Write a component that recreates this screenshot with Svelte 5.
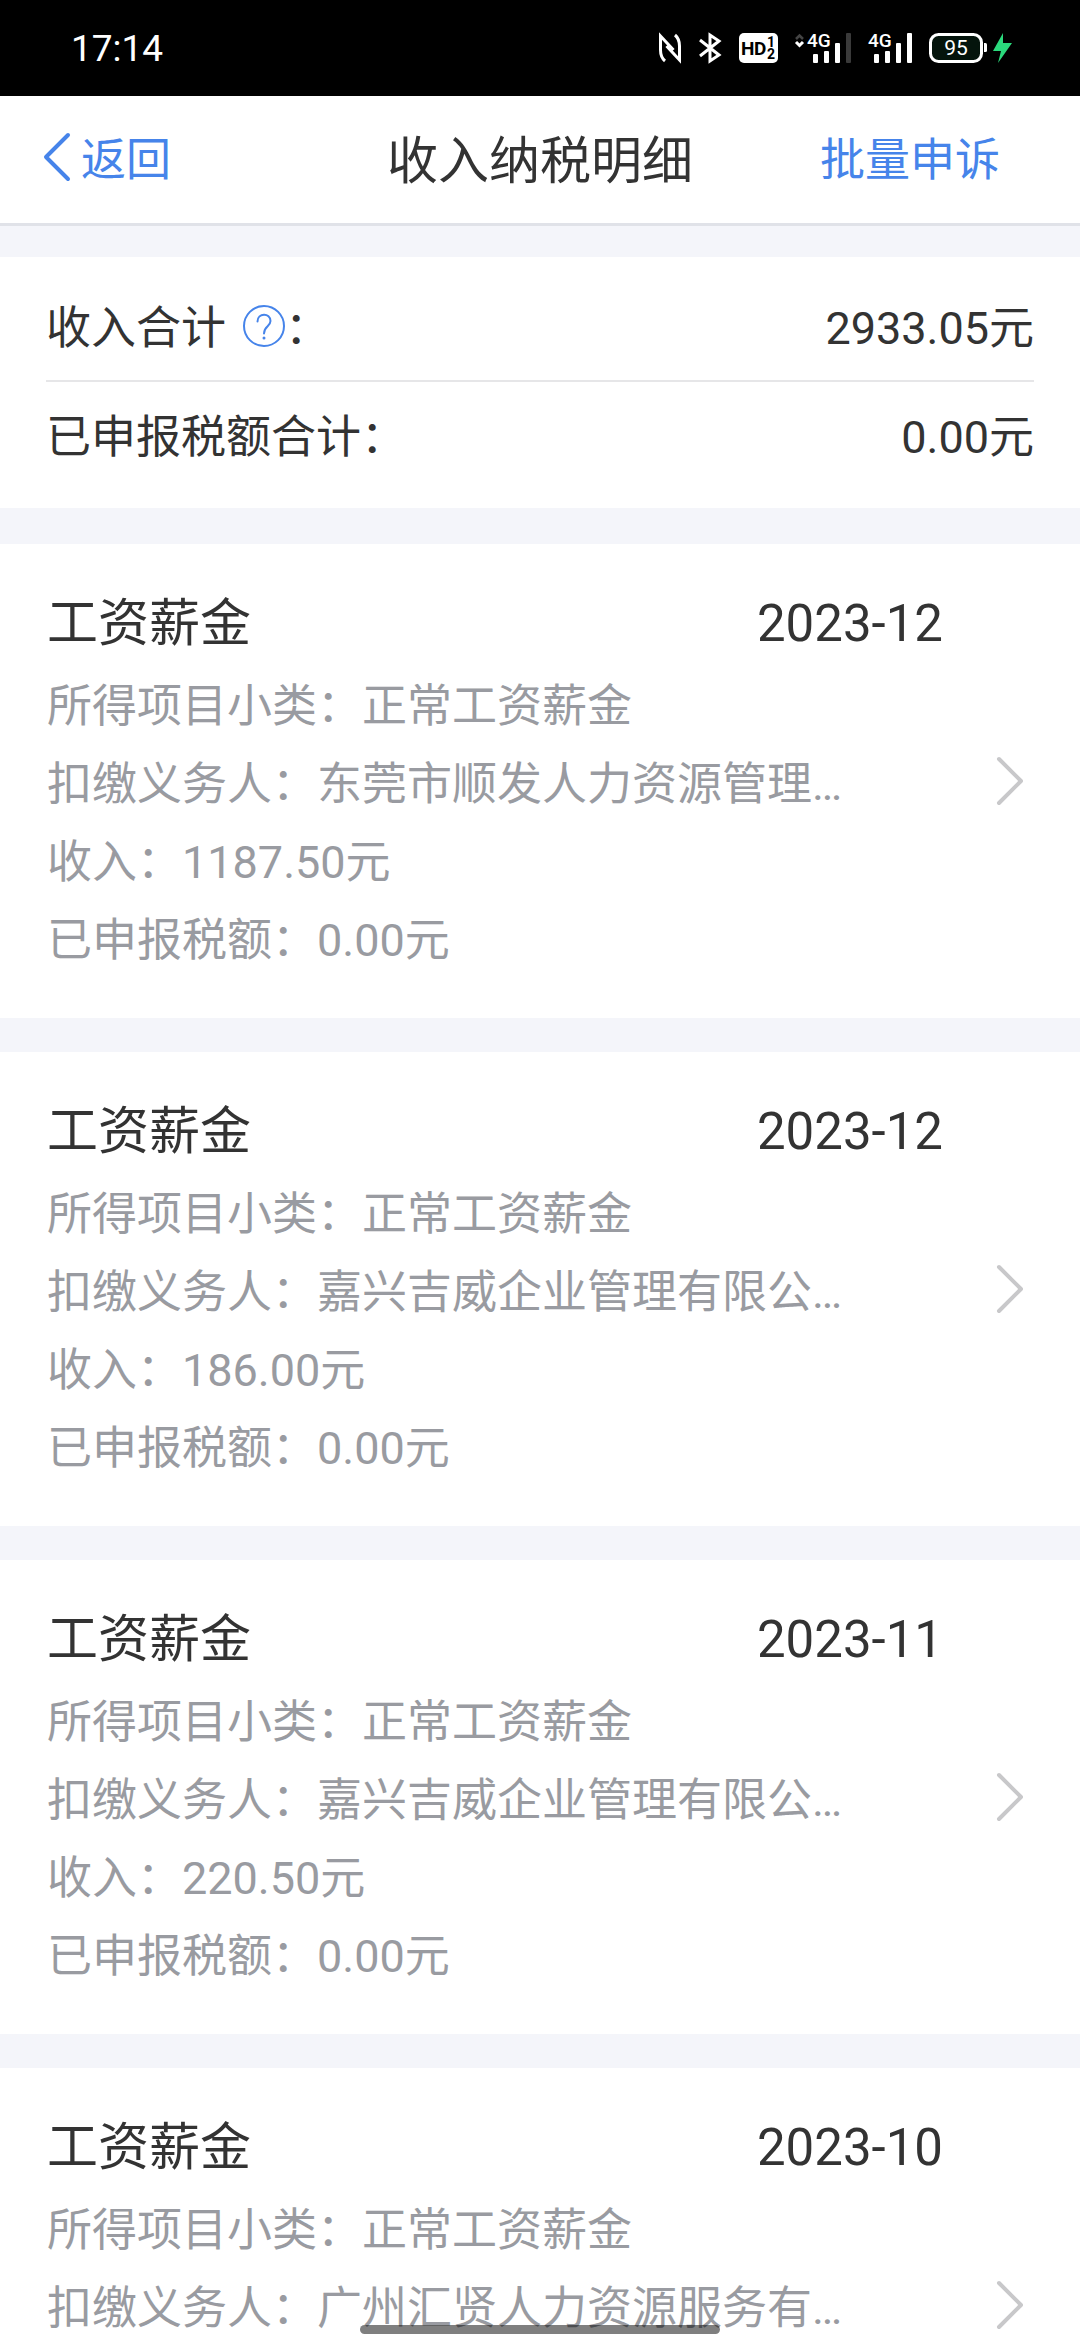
<script lang="ts">
	type RecordItem = {
		period: string;
		agent: string;
		income?: string;
		tax?: string;
	};

	const totals = { income: '2933.05元', tax: '0.00元' };

	const records: RecordItem[] = [
		{ period: '2023-12', agent: '东莞市顺发人力资源管理…', income: '1187.50元', tax: '0.00元' },
		{ period: '2023-12', agent: '嘉兴吉威企业管理有限公…', income: '186.00元', tax: '0.00元' },
		{ period: '2023-11', agent: '嘉兴吉威企业管理有限公…', income: '220.50元', tax: '0.00元' },
		{ period: '2023-10', agent: '广州汇贤人力资源服务有…' }
	];
</script>

<div class="screen">
	<div class="status-bar">
		<span class="clock">17:14</span>
		<div class="status-icons">
			<!-- nfc -->
			<svg width="22" height="30" viewBox="0 0 22 30" fill="none" stroke="#fff" stroke-width="3">
				<path d="M6 28C2.500 25 1.500 22 1.500 17V3L14.500 17" />
				<path d="M16 2C19.500 5 20.500 8 20.500 13V27L7.500 13" />
			</svg>
			<!-- bluetooth -->
			<svg class="bt" width="24" height="30" viewBox="0 0 24 30" fill="none" stroke="#fff" stroke-width="3">
				<path d="M2 7L21 22L12 28V2L21 8L2 23" />
			</svg>
			<!-- hd voice -->
			<svg class="hd" width="39" height="30" viewBox="0 0 39 30">
				<rect width="39" height="30" rx="5" fill="#fff" />
				<text x="2" y="22" font-size="19" font-weight="700">H</text>
				<text x="15" y="22" font-size="19" font-weight="700">D</text>
				<text x="28" y="14" font-size="14" font-weight="700">1</text>
				<text x="28" y="26" font-size="14" font-weight="700">2</text>
			</svg>
			<!-- sim 1 -->
			<svg class="sim1" width="56" height="30" viewBox="0 0 56 30" fill="#fff">
				<path d="M1 6L4.500 2.500L8 6" fill="none" stroke="#444" stroke-width="2.500" />
				<path d="M1 9L4.500 12.500L8 9" fill="none" stroke="#fff" stroke-width="3" />
				<text x="12" y="14" font-size="19" font-weight="500">4G</text>
				<rect x="18" y="21" width="5" height="9" rx="1" />
				<rect x="29" y="18" width="5" height="12" rx="1" />
				<rect x="40" y="10" width="5" height="20" rx="1" />
				<rect x="51" y="0" width="5" height="30" rx="1" fill="#3a3a3a" />
			</svg>
			<!-- sim 2 -->
			<svg class="sim2" width="44" height="30" viewBox="0 0 44 30" fill="#fff">
				<text x="0" y="14" font-size="19" font-weight="500">4G</text>
				<rect x="6" y="21" width="5" height="9" rx="1" />
				<rect x="17" y="18" width="5" height="12" rx="1" />
				<rect x="28" y="10" width="5" height="20" rx="1" />
				<rect x="39" y="0" width="5" height="30" rx="1" />
			</svg>
			<!-- battery -->
			<svg class="battery" width="84" height="32" viewBox="0 0 84 32" fill="#fff">
				<rect x="1.500" y="2.500" width="51" height="27" rx="8" fill="#04140c" stroke="#fff" stroke-width="3" />
				<path d="M55 11h1.500q1.500 0 1.500 1.500v6q0 1.500-1.500 1.500H55z" />
				<text x="27" y="23" font-size="21" text-anchor="middle">95</text>
				<path d="M74 1L64 19H72L69 31L83 11H74Z" fill="#2bd97c" />
			</svg>
		</div>
	</div>

	<header class="nav">
		<button class="back" type="button">
			<svg width="27" height="48" viewBox="0 0 27 48" fill="none" stroke="currentColor" stroke-width="4" stroke-linecap="round" stroke-linejoin="round">
				<path d="M24 2L2 24L24 46" />
			</svg>
			返回
		</button>
		<h1>收入纳税明细</h1>
		<button class="appeal" type="button">批量申诉</button>
	</header>

	<main>
		<dl class="summary">
			<div class="sum-row">
				<dt>
					收入合计
					<button class="help" type="button" aria-label="收入合计">
						<svg width="42" height="42" viewBox="0 0 42 42" fill="none" stroke="currentColor" stroke-width="2">
							<circle cx="21" cy="21" r="20" />
							<path d="M14.500 16.500C14.500 7.500 27.500 7.500 27.500 16C27.500 21.500 21 21 21 28.500" stroke-linecap="round" />
							<circle cx="21" cy="33" r="1.500" fill="currentColor" stroke="none" />
						</svg>
					</button>：
				</dt>
				<dd>{totals.income}</dd>
			</div>
			<div class="sum-row">
				<dt>已申报税额合计：</dt>
				<dd>{totals.tax}</dd>
			</div>
		</dl>

		<ul class="records">
			{#each records as r}
				<li>
					<button class="card" type="button">
						<span class="info">
							<span class="head">
								<span>工资薪金</span>
								<span>{r.period}</span>
							</span>
							<span class="line">所得项目小类：正常工资薪金</span>
							<span class="line">扣缴义务人：{r.agent}</span>
							{#if r.income}
								<span class="line">收入：{r.income}</span>
							{/if}
							{#if r.tax}
								<span class="line">已申报税额：{r.tax}</span>
							{/if}
						</span>
						<svg class="arrow" width="28" height="50" viewBox="0 0 28 50" fill="none" stroke="#c8c8ca" stroke-width="4" stroke-linecap="round" stroke-linejoin="round">
							<path d="M3 3L25 25L3 47" />
						</svg>
					</button>
				</li>
			{/each}
		</ul>
	</main>

	<div class="home-bar"></div>
</div>

<style>
	:global(body) {
		margin: 0;
	}

	.screen {
		display: flex;
		flex-direction: column;
		height: 100vh;
		overflow: hidden;
		background: #f4f5fa;
		color: #333;
		font-family: Roboto, 'Noto Sans CJK SC', sans-serif;
		font-size: 45px;
	}

	button {
		padding: 0;
		border: 0;
		background: none;
		color: inherit;
		font: inherit;
		cursor: pointer;
	}

	svg {
		display: block;
		flex-shrink: 0;
		overflow: visible;
	}

	.status-bar {
		display: flex;
		align-items: center;
		justify-content: space-between;
		flex-shrink: 0;
		height: 96px;
		padding: 0 67px 0 71px;
		background: #000;
		color: #fff;
	}

	.clock {
		font-size: 37px;
	}

	.status-icons {
		display: flex;
		align-items: center;
		gap: 17px;
	}

	.hd text {
		fill: #000;
	}

	.nav {
		display: grid;
		grid-template-columns: 1fr auto 1fr;
		align-items: center;
		flex-shrink: 0;
		box-sizing: border-box;
		height: 130px;
		padding: 0 80px 6px 44px;
		border-bottom: 3px solid #e0e2e8;
		background: #fff;
	}

	.nav h1 {
		margin: 0 0 0 36px;
		font-size: 51px;
		font-weight: 400;
	}

	.back,
	.appeal {
		color: #4684ea;
	}

	.back {
		display: flex;
		align-items: center;
		justify-self: start;
		gap: 10px;
	}

	.appeal {
		justify-self: end;
	}

	main {
		flex: 1;
		min-height: 0;
		padding-top: 31px;
		overflow: hidden;
	}

	.summary {
		margin: 0 0 36px;
		padding: 16px 46px 19px;
		background: #fff;
	}

	.sum-row {
		display: flex;
		align-items: center;
		justify-content: space-between;
		box-sizing: border-box;
		height: 107px;
		padding-bottom: 5px;
	}

	.sum-row + .sum-row {
		height: 109px;
		border-top: 2px solid #e6e6e8;
	}

	dt {
		display: flex;
		align-items: center;
	}

	dd {
		margin: 0;
	}

	.help {
		margin: 4px 0 0 17px;
		color: #4684ea;
	}

	.records {
		display: flex;
		flex-direction: column;
		gap: 34px;
		margin: 0;
		padding: 0;
		list-style: none;
	}

	.card {
		display: flex;
		align-items: center;
		width: 100%;
		min-height: 474px;
		padding: 38px 56px 38px 47px;
		background: #fff;
		text-align: left;
	}

	.info {
		display: flex;
		flex: 1;
		flex-direction: column;
		align-self: flex-start;
		min-width: 0;
	}

	.head {
		display: flex;
		justify-content: space-between;
		margin: 0 53px 2px 0;
		color: #333;
		font-size: 51px;
		line-height: 84px;
	}

	.line {
		color: #999ba1;
		line-height: 78px;
		white-space: nowrap;
	}

	.home-bar {
		position: fixed;
		bottom: 6px;
		left: 50%;
		width: 360px;
		height: 9px;
		margin-left: -180px;
		border-radius: 5px;
		background: rgba(0, 0, 0, 0.5);
	}
</style>
